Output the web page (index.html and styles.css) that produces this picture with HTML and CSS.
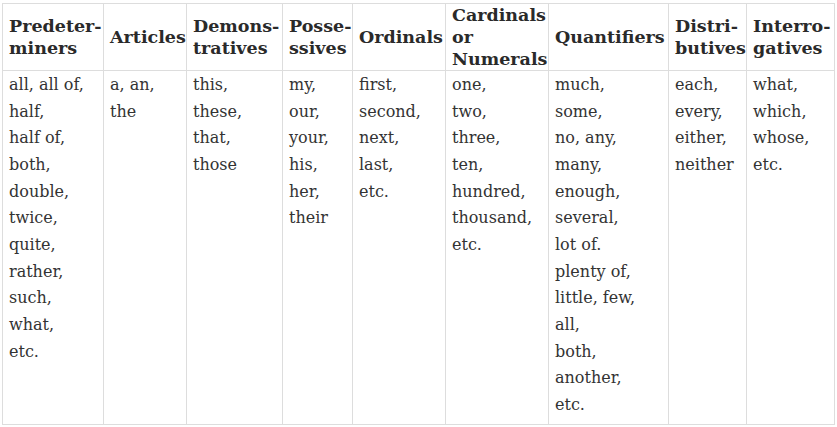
FILE: index.html
```html
<!DOCTYPE html>
<html lang="en">
<head>
<meta charset="utf-8">
<title>Determiners</title>
<link rel="stylesheet" href="styles.css">
</head>
<body>
<div class="wrap">
<table class="det">
  <colgroup>
    <col class="c1"><col class="c2"><col class="c3"><col class="c4"><col class="c5"><col class="c6"><col class="c7"><col class="c8"><col class="c9">
  </colgroup>
  <thead>
    <tr>
      <th>Predeter-<br>miners</th>
      <th>Articles</th>
      <th>Demons-<br>tratives</th>
      <th>Posse-<br>ssives</th>
      <th>Ordinals</th>
      <th>Cardinals<br>or<br>Numerals</th>
      <th>Quantifiers</th>
      <th>Distri-<br>butives</th>
      <th>Interro-<br>gatives</th>
    </tr>
  </thead>
  <tbody>
    <tr>
      <td>all, all of,<br>half,<br>half of,<br>both,<br>double,<br>twice,<br>quite,<br>rather,<br>such,<br>what,<br>etc.</td>
      <td>a, an,<br>the</td>
      <td>this,<br>these,<br>that,<br>those</td>
      <td>my,<br>our,<br>your,<br>his,<br>her,<br>their</td>
      <td>first,<br>second,<br>next,<br>last,<br>etc.</td>
      <td>one,<br>two,<br>three,<br>ten,<br>hundred,<br>thousand,<br>etc.</td>
      <td>much,<br>some,<br>no, any,<br>many,<br>enough,<br>several,<br>lot of.<br>plenty of,<br>little, few,<br>all,<br>both,<br>another,<br>etc.</td>
      <td>each,<br>every,<br>either,<br>neither</td>
      <td>what,<br>which,<br>whose,<br>etc.</td>
    </tr>
  </tbody>
</table>
</div>
</body>
</html>
```

FILE: styles.css
```css
html, body {
  margin: 0;
  padding: 0;
  background: #fff;
}

.wrap {
  padding: 3px 0 0 2px;
}

.det {
  border-collapse: collapse;
  table-layout: fixed;
  width: 832px;
  font-family: "DejaVu Serif", Georgia, serif;
  color: #333;
}

.c1 { width: 101px; }
.c2 { width: 83px; }
.c3 { width: 96px; }
.c4 { width: 70px; }
.c5 { width: 93px; }
.c6 { width: 103px; }
.c7 { width: 120px; }
.c8 { width: 78px; }
.c9 { width: 88px; }

.det th,
.det td {
  border: 1px solid #dddddd;
  text-align: left;
  white-space: nowrap;
  overflow: hidden;
}

.det th {
  height: 66px;
  padding: 0 0 0 6px;
  font-size: 17.5px;
  line-height: 22px;
  font-weight: bold;
  color: #2a2a2a;
  vertical-align: middle;
}

.det td {
  height: 352px;
  padding: 1px 0 0 6px;
  font-size: 16px;
  line-height: 26.67px;
  vertical-align: top;
}
```
